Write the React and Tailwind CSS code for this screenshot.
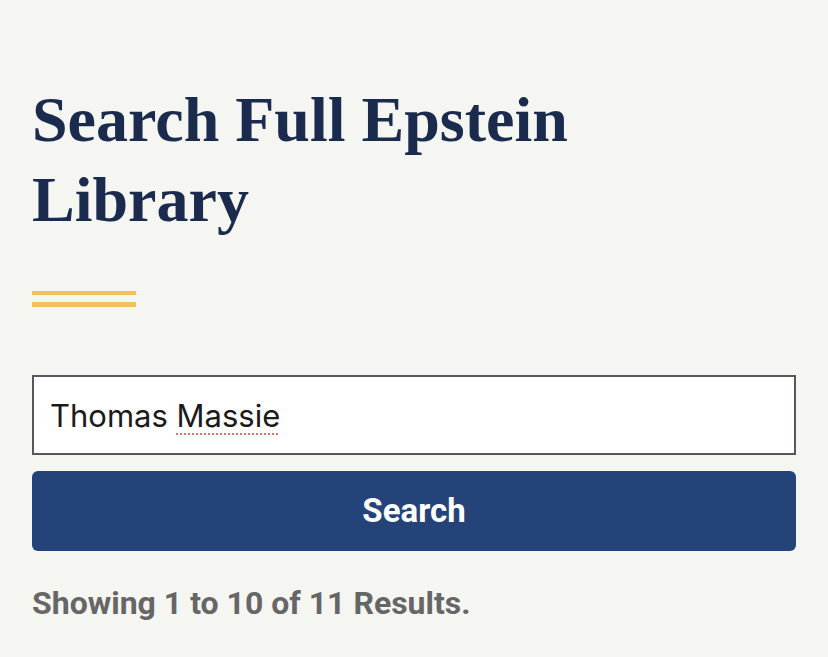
export default function App() {
  return (
    <div className="min-h-screen bg-[#f5f5f2] px-8 pt-[80px]">
      {/* Heading */}
      <h1 className="font-['Liberation_Serif',serif] text-[64px] leading-[80px] font-bold text-[#1b2b4e]">
        Search Full Epstein
        <br />
        Library
      </h1>

      {/* Gold rule */}
      <div className="mt-[51px] flex flex-col gap-[7px] w-[104px]">
        <div className="h-[4px] bg-[#f0c15a]" />
        <div className="h-[5px] bg-[#f0c15a]" />
      </div>

      {/* Search field */}
      <div className="mt-[68px] h-[80px] border-2 border-[#58585c] bg-white flex items-center px-[16px] pt-[3px] font-['Inter',sans-serif] text-[31px] text-[#1a1a1a]">
        <span>
          Thomas{" "}
          <span className="underline decoration-dotted decoration-[#e07070] decoration-2 underline-offset-[6px]">
            Massie
          </span>
        </span>
      </div>

      <button className="mt-4 w-full h-[80px] rounded-md bg-[#244479] text-white font-['Roboto',sans-serif] font-bold text-[33px]">
        Search
      </button>

      <p className="mt-[34px] font-['Roboto',sans-serif] font-bold text-[32px] leading-9 text-[#666666]">
        Showing 1 to 10 of 11 Results.
      </p>
    </div>
  );
}
